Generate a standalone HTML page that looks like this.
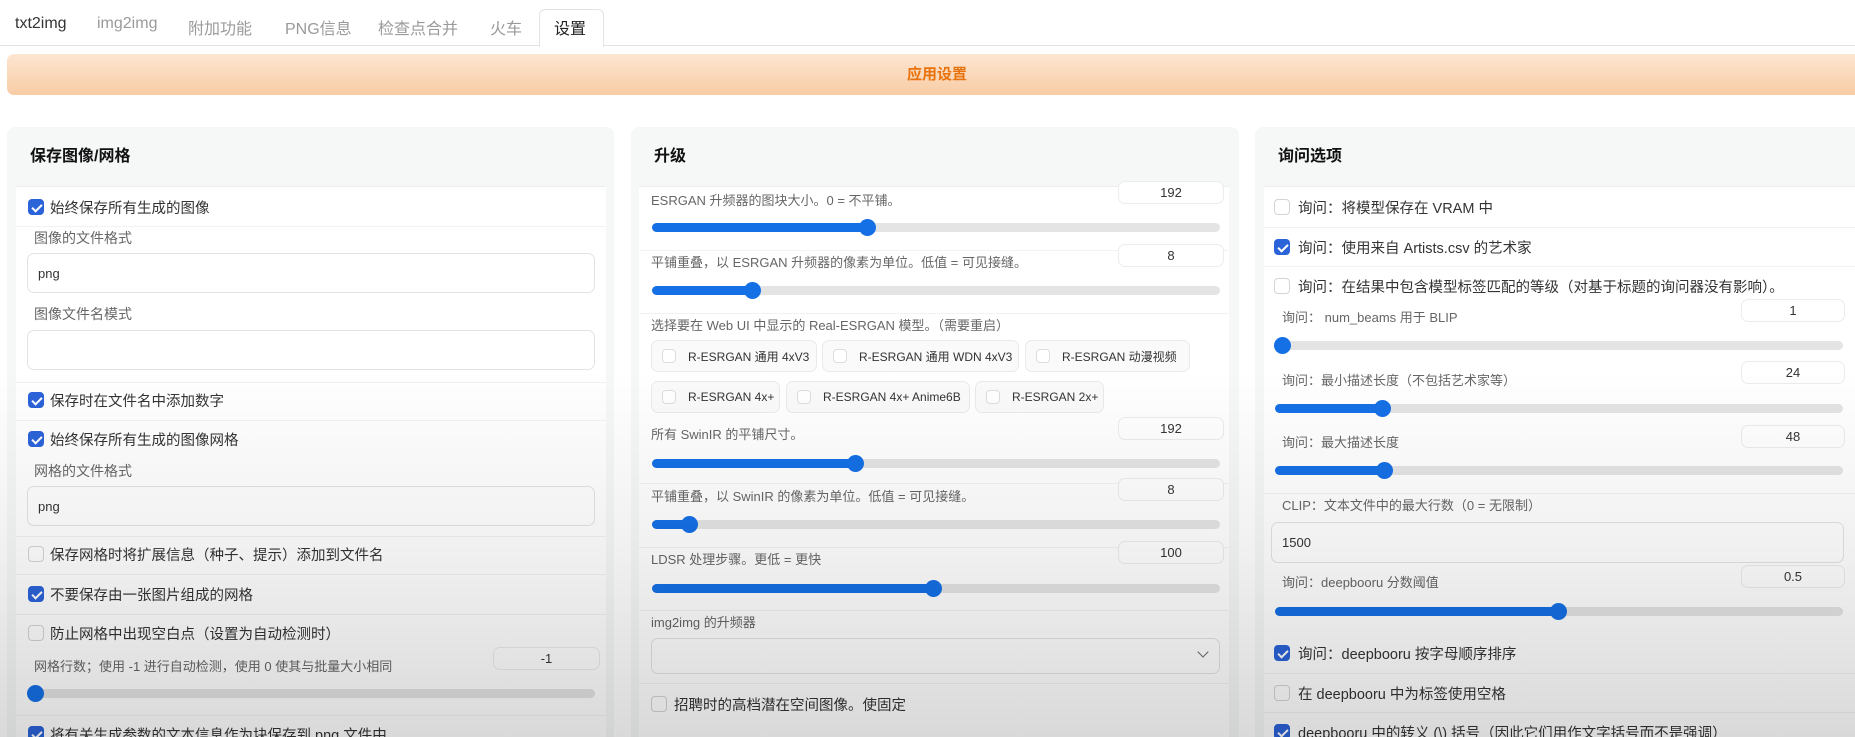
<!DOCTYPE html>
<html style="width:1855px;height:737px;overflow:hidden"><head><meta charset="utf-8"><style>
*{box-sizing:border-box;margin:0;padding:0}
body{width:1855px;height:737px;overflow:hidden;background:#fff;font-family:"Liberation Sans","Noto Sans CJK SC",sans-serif;position:relative;color:#333}
.a{position:absolute;white-space:nowrap}
.tab{position:absolute;top:15px;font-size:16px;color:#9a9a9a}
.panel{position:absolute;top:127px;height:610px;background:#f6f7f7;border-radius:8px 8px 0 0}
.inner{position:absolute;top:186px;height:551px;background:#fff;border-top:1px solid #eceef0}
.h{position:absolute;top:142px;font-size:16px;font-weight:bold;color:#111}
.cb{position:absolute;width:16px;height:16px;border:1px solid #d4d4d4;border-radius:4px;background:#fff}
.cb.on{background:#2b63d9;border-color:#2b63d9}
.cb.on:after{content:"";position:absolute;left:4.5px;top:1.5px;width:4px;height:8px;border:solid #fff;border-width:0 2px 2px 0;transform:rotate(45deg)}
.cl{position:absolute;font-size:14.5px;color:#333;white-space:nowrap}
.lb{position:absolute;font-size:13px;color:#666;white-space:nowrap}
.inp{position:absolute;border:1px solid #e3e3e3;border-radius:7px;background:#fff;font-size:13px;color:#333;padding-left:10px;display:flex;align-items:center}
.num{position:absolute;border:1px solid #ececec;border-radius:7px;background:#fff;font-size:13px;color:#333;text-align:center;line-height:21px;height:23px}
.tr{position:absolute;height:9px;background:#e4e4e4;border-radius:5px}
.fill{position:absolute;left:0;top:0;height:9px;background:#1570e6;border-radius:5px}
.th{position:absolute;top:-4px;width:17px;height:17px;border-radius:50%;background:#1570e6;margin-left:-8px}
.chip{position:absolute;height:32px;border:1px solid #eaeaea;border-radius:7px;background:#fafafa;font-size:12px;color:#333;display:flex;align-items:center;padding-left:10px;white-space:nowrap;overflow:hidden}
.chip i{display:inline-block;flex:none;width:14px;height:14px;border:1px solid #ddd;border-radius:4px;background:#fff;margin-right:12px}
.sep{position:absolute;height:1px;background:#f1f2f3}
</style></head><body>
<div class="tab" style="left:15px;color:#333">txt2img</div>
<div class="tab" style="left:97px">img2img</div>
<div class="tab" style="left:188px">附加功能</div>
<div class="tab" style="left:285px">PNG信息</div>
<div class="tab" style="left:378px">检查点合并</div>
<div class="a" style="left:539px;top:9px;width:65px;height:38px;border:1px solid #e3e3e3;border-bottom:none;border-radius:6px 6px 0 0;background:#fff;z-index:2"></div>
<div class="tab" style="left:490px">火车</div>
<div class="tab" style="left:554px;color:#222;z-index:3">设置</div>
<div class="a" style="left:0;top:45px;width:1855px;height:1px;background:#e3e3e3"></div>
<div class="a" style="left:7px;top:54px;width:1860px;height:41px;border-radius:7px;background:linear-gradient(#fde6d2,#f8cca4);color:#e8720c;font-weight:bold;font-size:15px;text-align:center;line-height:41px">应用设置</div>

<div class="panel" style="left:7px;width:607px"></div>
<div class="panel" style="left:631px;width:608px"></div>
<div class="panel" style="left:1255px;width:620px"></div>
<div class="h" style="left:30px">保存图像/网格</div>
<div class="h" style="left:654px">升级</div>
<div class="h" style="left:1278px">询问选项</div>
<div class="inner" style="left:16px;width:590px"></div>
<div class="inner" style="left:639px;width:590px"></div>
<div class="inner" style="left:1264px;width:600px"></div>

<!-- left -->
<div class="cb on" style="left:28px;top:199px"></div><div class="cl" style="left:50px;top:197px">始终保存所有生成的图像</div>
<div class="sep" style="left:16px;top:226px;width:590px"></div>
<div class="lb" style="left:34px;top:228px;font-size:14px">图像的文件格式</div>
<div class="inp" style="left:27px;top:253px;width:568px;height:40px">png</div>
<div class="lb" style="left:34px;top:304px;font-size:14px">图像文件名模式</div>
<div class="inp" style="left:27px;top:330px;width:568px;height:40px"></div>
<div class="sep" style="left:16px;top:382px;width:590px"></div>
<div class="cb on" style="left:28px;top:392px"></div><div class="cl" style="left:50px;top:390px">保存时在文件名中添加数字</div>
<div class="sep" style="left:16px;top:420px;width:590px"></div>
<div class="cb on" style="left:28px;top:431px"></div><div class="cl" style="left:50px;top:429px">始终保存所有生成的图像网格</div>
<div class="lb" style="left:34px;top:461px;font-size:14px">网格的文件格式</div>
<div class="inp" style="left:27px;top:486px;width:568px;height:40px">png</div>
<div class="sep" style="left:16px;top:536px;width:590px"></div>
<div class="cb" style="left:28px;top:546px"></div><div class="cl" style="left:50px;top:544px">保存网格时将扩展信息（种子、提示）添加到文件名</div>
<div class="sep" style="left:16px;top:574px;width:590px"></div>
<div class="cb on" style="left:28px;top:586px"></div><div class="cl" style="left:50px;top:584px">不要保存由一张图片组成的网格</div>
<div class="sep" style="left:16px;top:614px;width:590px"></div>
<div class="cb" style="left:28px;top:625px"></div><div class="cl" style="left:50px;top:623px">防止网格中出现空白点（设置为自动检测时）</div>
<div class="lb" style="left:34px;top:656px">网格行数；使用 -1 进行自动检测，使用 0 使其与批量大小相同</div>
<div class="num" style="left:493px;top:647px;width:107px">-1</div>
<div class="tr" style="left:27px;top:689px;width:568px"><div class="th" style="left:8px"></div></div>
<div class="sep" style="left:16px;top:715px;width:590px"></div>
<div class="cb on" style="left:28px;top:726px"></div><div class="cl" style="left:50px;top:724px">将有关生成参数的文本信息作为块保存到 png 文件中</div>

<!-- middle -->
<div class="lb" style="left:651px;top:190px">ESRGAN 升频器的图块大小。0 = 不平铺。</div>
<div class="num" style="left:1118px;top:181px;width:106px">192</div>
<div class="tr" style="left:652px;top:223px;width:568px"><div class="fill" style="width:215px"></div><div class="th" style="left:215px"></div></div>
<div class="sep" style="left:639px;top:250px;width:590px"></div>
<div class="lb" style="left:651px;top:252px">平铺重叠，以 ESRGAN 升频器的像素为单位。低值 = 可见接缝。</div>
<div class="num" style="left:1118px;top:244px;width:106px">8</div>
<div class="tr" style="left:652px;top:286px;width:568px"><div class="fill" style="width:100px"></div><div class="th" style="left:100px"></div></div>
<div class="sep" style="left:639px;top:313px;width:590px"></div>
<div class="lb" style="left:651px;top:315px">选择要在 Web UI 中显示的 Real-ESRGAN 模型。（需要重启）</div>
<div class="chip" style="left:651px;top:340px;width:166px"><i></i>R-ESRGAN 通用 4xV3</div>
<div class="chip" style="left:822px;top:340px;width:197px"><i></i>R-ESRGAN 通用 WDN 4xV3</div>
<div class="chip" style="left:1025px;top:340px;width:165px"><i></i>R-ESRGAN 动漫视频</div>
<div class="chip" style="left:651px;top:381px;width:129px"><i></i>R-ESRGAN 4x+</div>
<div class="chip" style="left:786px;top:381px;width:184px"><i></i>R-ESRGAN 4x+ Anime6B</div>
<div class="chip" style="left:975px;top:381px;width:129px"><i></i>R-ESRGAN 2x+</div>
<div class="lb" style="left:651px;top:424px">所有 SwinIR 的平铺尺寸。</div>
<div class="num" style="left:1118px;top:417px;width:106px">192</div>
<div class="tr" style="left:652px;top:459px;width:568px"><div class="fill" style="width:203px"></div><div class="th" style="left:203px"></div></div>
<div class="sep" style="left:639px;top:483px;width:590px"></div>
<div class="lb" style="left:651px;top:486px">平铺重叠，以 SwinIR 的像素为单位。低值 = 可见接缝。</div>
<div class="num" style="left:1118px;top:478px;width:106px">8</div>
<div class="tr" style="left:652px;top:520px;width:568px"><div class="fill" style="width:37px"></div><div class="th" style="left:37px"></div></div>
<div class="sep" style="left:639px;top:547px;width:590px"></div>
<div class="lb" style="left:651px;top:549px">LDSR 处理步骤。更低 = 更快</div>
<div class="num" style="left:1118px;top:541px;width:106px">100</div>
<div class="tr" style="left:652px;top:584px;width:568px"><div class="fill" style="width:281px"></div><div class="th" style="left:281px"></div></div>
<div class="sep" style="left:639px;top:610px;width:590px"></div>
<div class="lb" style="left:651px;top:612px">img2img 的升频器</div>
<div class="inp" style="left:651px;top:638px;width:569px;height:36px"><span style="position:absolute;right:12px;top:9px;width:8px;height:8px;border:solid #666;border-width:0 1.5px 1.5px 0;transform:rotate(45deg)"></span></div>
<div class="sep" style="left:639px;top:683px;width:590px"></div>
<div class="cb" style="left:651px;top:696px"></div><div class="cl" style="left:674px;top:694px">招聘时的高档潜在空间图像。使固定</div>

<!-- right -->
<div class="cb" style="left:1274px;top:199px"></div><div class="cl" style="left:1298px;top:197px">询问：将模型保存在 VRAM 中</div>
<div class="sep" style="left:1264px;top:227px;width:600px"></div>
<div class="cb on" style="left:1274px;top:239px"></div><div class="cl" style="left:1298px;top:237px">询问：使用来自 Artists.csv 的艺术家</div>
<div class="sep" style="left:1264px;top:266px;width:600px"></div>
<div class="cb" style="left:1274px;top:278px"></div><div class="cl" style="left:1298px;top:276px">询问：在结果中包含模型标签匹配的等级（对基于标题的询问器没有影响）。</div>
<div class="lb" style="left:1282px;top:307px">询问： num_beams 用于 BLIP</div>
<div class="num" style="left:1741px;top:299px;width:104px">1</div>
<div class="tr" style="left:1275px;top:341px;width:568px"><div class="th" style="left:7px"></div></div>
<div class="lb" style="left:1282px;top:370px">询问：最小描述长度（不包括艺术家等）</div>
<div class="num" style="left:1741px;top:361px;width:104px">24</div>
<div class="tr" style="left:1275px;top:404px;width:568px"><div class="fill" style="width:107px"></div><div class="th" style="left:107px"></div></div>
<div class="lb" style="left:1282px;top:432px">询问：最大描述长度</div>
<div class="num" style="left:1741px;top:425px;width:104px">48</div>
<div class="tr" style="left:1275px;top:466px;width:568px"><div class="fill" style="width:109px"></div><div class="th" style="left:109px"></div></div>
<div class="sep" style="left:1264px;top:493px;width:600px"></div>
<div class="lb" style="left:1282px;top:495px">CLIP：文本文件中的最大行数（0 = 无限制）</div>
<div class="inp" style="left:1271px;top:522px;width:573px;height:41px">1500</div>
<div class="lb" style="left:1282px;top:572px">询问：deepbooru 分数阈值</div>
<div class="num" style="left:1741px;top:565px;width:104px">0.5</div>
<div class="tr" style="left:1275px;top:607px;width:568px"><div class="fill" style="width:283px"></div><div class="th" style="left:283px"></div></div>
<div class="cb on" style="left:1274px;top:645px"></div><div class="cl" style="left:1298px;top:643px">询问：deepbooru 按字母顺序排序</div>
<div class="sep" style="left:1264px;top:673px;width:600px"></div>
<div class="cb" style="left:1274px;top:685px"></div><div class="cl" style="left:1298px;top:683px">在 deepbooru 中为标签使用空格</div>
<div class="sep" style="left:1264px;top:712px;width:600px"></div>
<div class="cb on" style="left:1274px;top:724px"></div><div class="cl" style="left:1298px;top:722px">deepbooru 中的转义 (\) 括号（因此它们用作文字括号而不是强调）</div>

<div class="a" style="left:0;top:0;width:1855px;height:737px;pointer-events:none;background:linear-gradient(to bottom,rgba(0,0,0,0) 0%,rgba(0,0,0,0) 50%,rgba(0,0,0,0.06) 75%,rgba(0,0,0,0.15) 100%);z-index:10"></div>
</body></html>
